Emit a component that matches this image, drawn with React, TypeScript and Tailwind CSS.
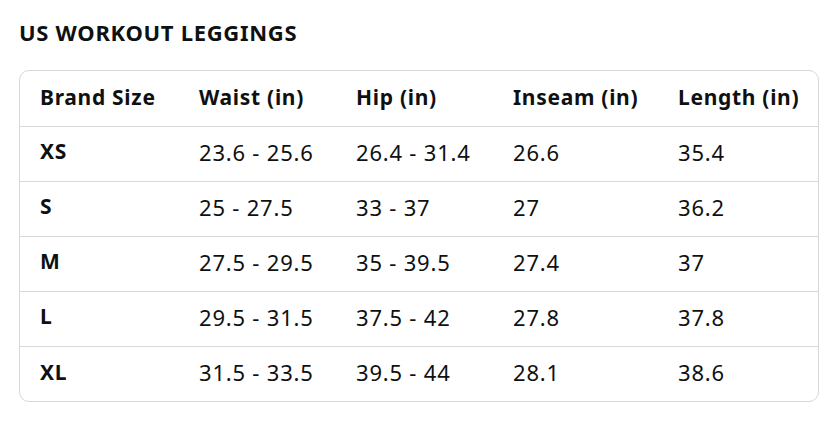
import React from 'react';

const headers = ['Brand Size', 'Waist (in)', 'Hip (in)', 'Inseam (in)', 'Length (in)'];

const rows = [
  ['XS', '23.6 - 25.6', '26.4 - 31.4', '26.6', '35.4'],
  ['S', '25 - 27.5', '33 - 37', '27', '36.2'],
  ['M', '27.5 - 29.5', '35 - 39.5', '27.4', '37'],
  ['L', '29.5 - 31.5', '37.5 - 42', '27.8', '37.8'],
  ['XL', '31.5 - 33.5', '39.5 - 44', '28.1', '38.6'],
];

const colWidths = ['w-[179px]', 'w-[157px]', 'w-[157px]', 'w-[165px]', 'w-auto'];

const App: React.FC = () => {
  return (
    <div className="w-[837px] h-[425px] bg-white text-[#0f1111] font-['Noto_Sans',sans-serif] px-[19px] pt-[18px]">
      <h2 className="text-[22px] leading-[28px] font-bold tracking-[0.7px]">US WORKOUT LEGGINGS</h2>
      <div className="mt-[24px] w-[800px] border border-[#d5d9d9] rounded-[10px] overflow-hidden">
        <table className="w-full border-collapse table-fixed">
          <thead>
            <tr className="h-[55px]">
              {headers.map((h, i) => (
                <th key={h} className={`${colWidths[i]} text-left font-bold text-[21px] tracking-[0.7px] pb-[2px] ${i === 0 ? 'pl-[20px]' : ''}`}>
                  {h}
                </th>
              ))}
            </tr>
          </thead>
          <tbody>
            {rows.map(r => (
              <tr key={r[0]} className="h-[55px] border-t border-[#d5d9d9]">
                {r.map((c, i) => (
                  <td
                    key={i}
                    className={`pb-[3px] ${i === 0 ? 'pl-[20px] font-bold text-[21px] tracking-[0.7px]' : 'text-[22px] tracking-[0.8px]'}`}
                  >
                    {c}
                  </td>
                ))}
              </tr>
            ))}
          </tbody>
        </table>
      </div>
    </div>
  );
};

export default App;
